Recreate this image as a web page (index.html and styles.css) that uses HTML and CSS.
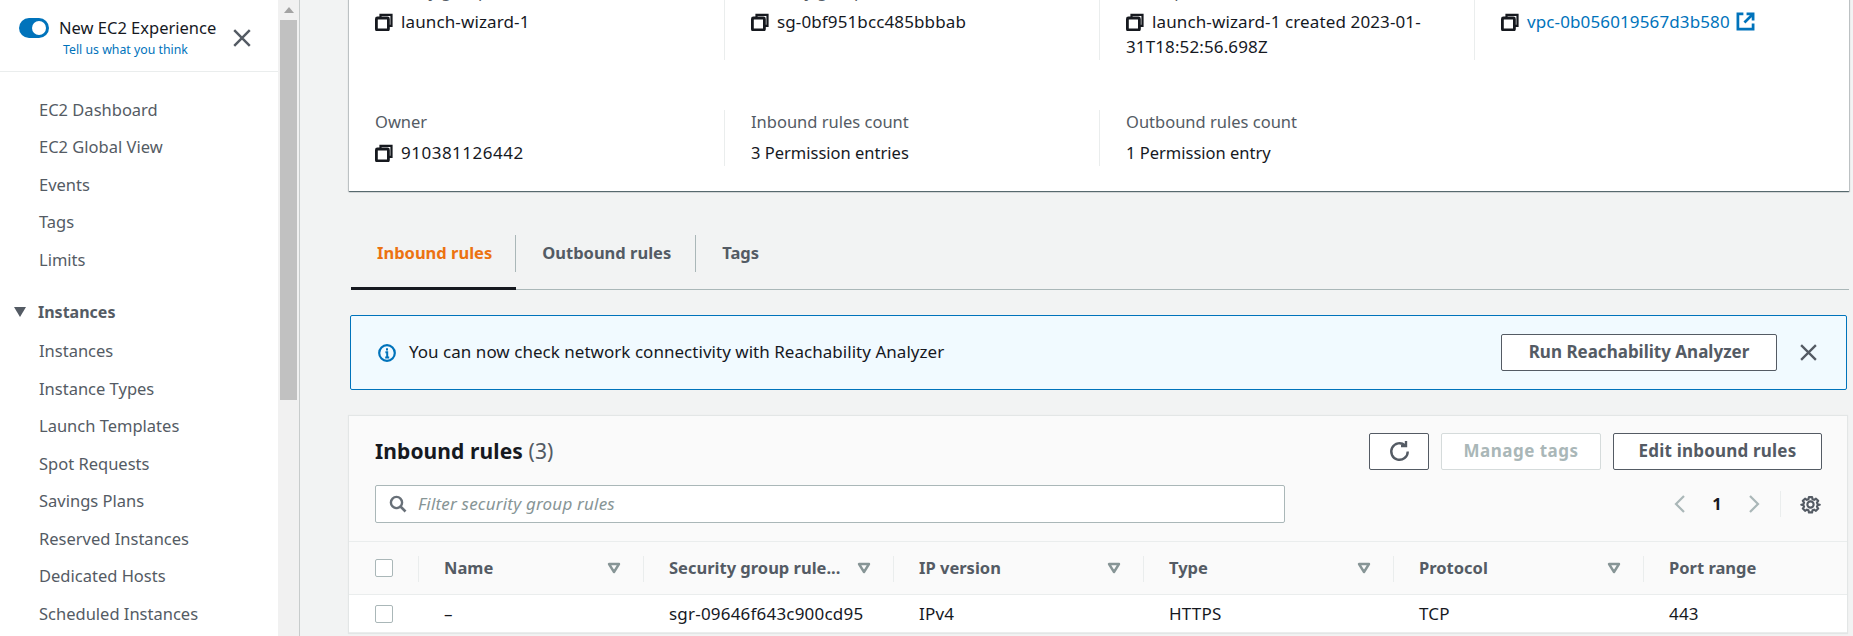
FILE: index.html
```html
<!DOCTYPE html>
<html lang="en">
<head>
    <meta charset="UTF-8">
    <title>Security Groups | EC2 Management Console</title>
    <link rel="stylesheet" href="styles.css">
</head>
<body>

<svg class="icon-defs" width="0" height="0">
    <symbol id="copy" viewBox="0 0 18 18">
        <path d="M5.5 5V1.8h11v11h-3" fill="none" stroke="currentColor" stroke-width="2.2"/>
        <rect x="1.4" y="5" width="12" height="12" rx="1" fill="none" stroke="currentColor" stroke-width="2.8"/>
    </symbol>
    <symbol id="close" viewBox="0 0 18 18">
        <path d="M2 2l14 14M16 2L2 16" fill="none" stroke="currentColor" stroke-width="2.2"/>
    </symbol>
    <symbol id="sort" viewBox="0 0 14 12">
        <path d="M2 2h10L7 10z" fill="none" stroke="currentColor" stroke-width="2.4" stroke-linejoin="round"/>
    </symbol>
</svg>

<aside class="sidebar">
    <div class="side-content">
        <div class="experience">
            <div class="exp-top">
                <span class="toggle"></span>
                <span class="exp-title">New EC2 Experience</span>
            </div>
            <a class="exp-link">Tell us what you think</a>
            <svg class="exp-close"><use href="#close"/></svg>
        </div>
        <nav class="side-nav">
            <a>EC2 Dashboard</a>
            <a>EC2 Global View</a>
            <a>Events</a>
            <a>Tags</a>
            <a>Limits</a>
            <div class="side-heading"><span class="caret"></span>Instances</div>
            <a>Instances</a>
            <a>Instance Types</a>
            <a>Launch Templates</a>
            <a>Spot Requests</a>
            <a>Savings Plans</a>
            <a>Reserved Instances</a>
            <a>Dedicated Hosts</a>
            <a>Scheduled Instances</a>
        </nav>
    </div>
    <div class="scrollbar">
        <span class="scroll-arrow"></span>
        <span class="scroll-thumb"></span>
    </div>
</aside>

<main class="main">
    <section class="details">
        <div class="cell">
            <div class="label">Security group name</div>
            <div class="value"><svg class="copy"><use href="#copy"/></svg>launch-wizard-1</div>
        </div>
        <div class="cell divided">
            <div class="label">Security group ID</div>
            <div class="value"><svg class="copy"><use href="#copy"/></svg>sg-0bf951bcc485bbbab</div>
        </div>
        <div class="cell divided">
            <div class="label">Description</div>
            <div class="value"><svg class="copy"><use href="#copy"/></svg>launch-wizard-1 created 2023-01-31T18:52:56.698Z</div>
        </div>
        <div class="cell divided">
            <div class="label">VPC ID</div>
            <div class="value">
                <svg class="copy"><use href="#copy"/></svg><a class="link">vpc-0b056019567d3b580</a>
                <svg class="external" viewBox="0 0 18 18"><path d="M7 1.8H1.8v14.4h14.4V11M10 1.8h6.2V8M16 2L8 10" fill="none" stroke="currentColor" stroke-width="2.6"/></svg>
            </div>
        </div>
        <div class="cell">
            <div class="label">Owner</div>
            <div class="value digits"><svg class="copy"><use href="#copy"/></svg>910381126442</div>
        </div>
        <div class="cell divided">
            <div class="label">Inbound rules count</div>
            <div class="value plain">3 Permission entries</div>
        </div>
        <div class="cell divided">
            <div class="label">Outbound rules count</div>
            <div class="value plain">1 Permission entry</div>
        </div>
    </section>

    <div class="tabs">
        <div class="tab active"><span class="tab-label">Inbound rules</span></div>
        <div class="tab"><span class="tab-label">Outbound rules</span></div>
        <div class="tab"><span class="tab-label last">Tags</span></div>
    </div>

    <div class="alert">
        <svg class="info" viewBox="0 0 18 18">
            <circle cx="9" cy="9" r="7.8" fill="none" stroke="currentColor" stroke-width="2.2"/>
            <path d="M9 4.2v2.4M7.4 8.2H9.2v5M7.2 13.4h4" fill="none" stroke="currentColor" stroke-width="2"/>
        </svg>
        <span class="alert-text">You can now check network connectivity with Reachability Analyzer</span>
        <button class="btn alert-btn">Run Reachability Analyzer</button>
        <svg class="alert-close"><use href="#close"/></svg>
    </div>

    <section class="rules">
        <div class="rules-head">
            <div class="rules-top">
                <h2>Inbound rules <span class="count">(3)</span></h2>
                <div class="actions">
                    <button class="btn refresh">
                        <svg viewBox="0 0 20 20" width="25" height="25"><path d="M16.6 10a6.6 6.6 0 1 1-2.2-4.9M15.2 1.6v4h-4" fill="none" stroke="currentColor" stroke-width="1.9"/></svg>
                    </button>
                    <button class="btn disabled">Manage tags</button>
                    <button class="btn edit">Edit inbound rules</button>
                </div>
            </div>
            <div class="rules-filter">
                <div class="filter">
                    <svg viewBox="0 0 18 18" width="18" height="18"><circle cx="7.5" cy="7.5" r="5.6" fill="none" stroke="currentColor" stroke-width="2.4"/><path d="M11.5 11.5l5 5" fill="none" stroke="currentColor" stroke-width="2.6"/></svg>
                    <span>Filter security group rules</span>
                </div>
                <div class="pager">
                    <svg viewBox="0 0 14 20" width="14" height="20"><path d="M11 2L3 10l8 8" fill="none" stroke="currentColor" stroke-width="2.2"/></svg>
                    <b>1</b>
                    <svg viewBox="0 0 14 20" width="14" height="20"><path d="M3 2l8 8-8 8" fill="none" stroke="currentColor" stroke-width="2.2"/></svg>
                    <span class="pager-line">
                        <svg viewBox="0 0 20 20" width="21" height="21"><circle cx="10" cy="10" r="3" fill="none" stroke="currentColor" stroke-width="2"/><path d="M8.3 1.5h3.4l.5 2.3 1.7.7 2-1.3 2.4 2.4-1.3 2 .7 1.7 2.3.5v0l-2.3.5-.7 1.7 1.3 2-2.4 2.4-2-1.3-1.7.7-.5 2.3H8.3l-.5-2.3-1.7-.7-2 1.3-2.4-2.4 1.3-2-.7-1.7-2.3-.5v0l2.3-.5.7-1.7-1.3-2 2.4-2.4 2 1.3 1.7-.7z" transform="translate(1.2 1.6) scale(.88)" fill="none" stroke="currentColor" stroke-width="2.3" stroke-linejoin="round"/></svg>
                    </span>
                </div>
            </div>
        </div>
        <div class="table">
            <div class="th first"><span class="check"></span></div>
            <div class="th"><span class="th-text">Name</span><svg class="sort"><use href="#sort"/></svg></div>
            <div class="th"><span class="th-text">Security group rule...</span><svg class="sort"><use href="#sort"/></svg></div>
            <div class="th"><span class="th-text">IP version</span><svg class="sort"><use href="#sort"/></svg></div>
            <div class="th"><span class="th-text">Type</span><svg class="sort"><use href="#sort"/></svg></div>
            <div class="th"><span class="th-text">Protocol</span><svg class="sort"><use href="#sort"/></svg></div>
            <div class="th"><span class="th-text">Port range</span></div>

            <div class="td first"><span class="check"></span></div>
            <div class="td">–</div>
            <div class="td">sgr-09646f643c900cd95</div>
            <div class="td">IPv4</div>
            <div class="td">HTTPS</div>
            <div class="td">TCP</div>
            <div class="td">443</div>
        </div>
    </section>
</main>

</body>
</html>
```

FILE: styles.css
```css
* {
    box-sizing: border-box;
}

body {
    margin: 0;
    height: 100vh;
    overflow: hidden;
    display: flex;
    background: #f2f3f3;
    color: #16191f;
    font-family: "Noto Sans", "Liberation Sans", sans-serif;
    font-size: 16.5px;
}

.icon-defs {
    position: absolute;
}

/* left nav */
.sidebar {
    width: 300px;
    flex: none;
    display: flex;
    background: #fff;
    border-right: 1px solid #c8cccc;
}

.side-content {
    width: 278px;
    flex: none;
}

.experience {
    height: 72px;
    padding: 15px 0 0 19px;
    border-bottom: 1px solid #eaeded;
    display: grid;
    grid-template-columns: 202px 40px;
    grid-template-rows: 24px 22px;
}

.exp-top {
    display: flex;
    align-items: center;
    gap: 10px;
}

.toggle {
    width: 30px;
    height: 20px;
    flex: none;
    margin-top: 2px;
    border-radius: 10px;
    background: #0073bb;
    display: flex;
    justify-content: flex-end;
    align-items: center;
    padding-right: 3px;
}

.toggle::after {
    content: "";
    width: 14px;
    height: 14px;
    border-radius: 50%;
    background: #fff;
}

.exp-title {
    white-space: nowrap;
    color: #16191f;
}

.exp-link {
    grid-row: 2;
    padding-left: 44px;
    font-size: 12.3px;
    line-height: 22px;
    color: #0073bb;
    white-space: nowrap;
}

.exp-close {
    grid-column: 2;
    grid-row: 1 / 3;
    width: 20px;
    height: 20px;
    margin: 13px 0 0 11px;
    color: #545b64;
}

.side-nav {
    padding-top: 18.5px;
    display: flex;
    flex-direction: column;
}

.side-nav a {
    height: 37.5px;
    line-height: 37.5px;
    padding-left: 39px;
    color: #545b64;
}

.side-heading {
    display: flex;
    align-items: center;
    gap: 12px;
    height: 37px;
    margin: 15px 0 2px;
    padding-left: 14px;
    font-weight: 700;
    font-size: 16px;
    color: #545b64;
}

.caret {
    width: 0;
    height: 0;
    border-left: 6.5px solid transparent;
    border-right: 6.5px solid transparent;
    border-top: 10px solid #545b64;
}

.scrollbar {
    flex: 1;
    background: #f1f1f1;
    padding: 7px 2px 0 2px;
    display: flex;
    flex-direction: column;
    align-items: stretch;
}

.scroll-arrow {
    align-self: center;
    width: 0;
    height: 0;
    border-left: 5px solid transparent;
    border-right: 5px solid transparent;
    border-bottom: 6px solid #a3a3a3;
}

.scroll-thumb {
    margin-top: 7px;
    height: 380px;
    background: #c1c1c1;
}

/* main column */
.main {
    flex: 1;
    min-width: 0;
    padding: 0 4px 0 49px;
}

.details {
    margin-top: -47px;
    padding: 26px 0 25px 26px;
    background: #fff;
    box-shadow: 0 1px 1px 0 rgba(0, 28, 36, 0.5), 1px 1px 1px 0 rgba(0, 28, 36, 0.15), -1px 1px 1px 0 rgba(0, 28, 36, 0.15);
    display: grid;
    grid-template-columns: 349px 375px 375px 375px;
    row-gap: 50px;
}

.cell {
    padding-right: 26px;
}

.divided {
    padding-left: 26px;
    border-left: 1px solid #eaeded;
}

.label {
    line-height: 24px;
    margin-bottom: 6px;
    color: #545b64;
}

.value {
    font-size: 17px;
    letter-spacing: 0.12px;
    line-height: 25px;
    padding-bottom: 1px;
}

.value.plain {
    font-size: 16.5px;
    letter-spacing: 0;
}

.value.digits {
    letter-spacing: 0.5px;
}

.copy {
    width: 18px;
    height: 18px;
    margin-right: 8px;
    vertical-align: -3px;
    color: #16191f;
}

.link {
    color: #0073bb;
}

.external {
    width: 19px;
    height: 19px;
    margin-left: 2px;
    vertical-align: -3px;
    color: #0073bb;
}

/* tabs */
.tabs {
    margin: 44px 0 0 2px;
    display: flex;
    box-shadow: inset 0 -1px 0 #aab7b8;
}

.tab {
    padding-bottom: 15px;
    border-bottom: 3px solid transparent;
}

.tab.active {
    border-bottom-color: #16191f;
}

.tab-label {
    display: block;
    height: 37px;
    line-height: 35px;
    padding: 0 24px 0 26px;
    font-weight: 700;
    color: #545b64;
    border-right: 1px solid #aab7b8;
    white-space: nowrap;
}

.tab.active .tab-label {
    color: #ec7211;
    padding-right: 23px;
}

.tab-label.last {
    border-right: none;
}

/* info banner */
.alert {
    margin: 25px 2px 0 1px;
    height: 75px;
    padding: 0 28px 0 27px;
    display: flex;
    align-items: center;
    background: #f1faff;
    border: 1px solid #0073bb;
    border-radius: 2px;
}

.info {
    width: 18px;
    height: 18px;
    flex: none;
    color: #0073bb;
    margin-right: 13px;
}

.alert-text {
    flex: 1;
    font-size: 17px;
    letter-spacing: 0.03px;
    padding-bottom: 2px;
}

.btn {
    height: 37px;
    padding: 0 22px 2px;
    border: 1px solid #545b64;
    border-radius: 2px;
    background: #fff;
    color: #545b64;
    font: 700 17px "Noto Sans", "Liberation Sans", sans-serif;
    white-space: nowrap;
}

.alert-btn {
    width: 276px;
    padding: 0 0 2px;
}

.alert-close {
    width: 19px;
    height: 19px;
    margin-left: 22px;
    color: #545b64;
}

/* rules table */
.rules {
    margin: 26px 2px 0 0;
    background: #fff;
    box-shadow: 0 0 1px 1px rgba(0, 28, 36, 0.06);
}

.rules-head {
    padding: 17px 25px 18px 26px;
    background: #fafafa;
    border-bottom: 1px solid #eaeded;
}

.rules-top {
    display: flex;
    justify-content: space-between;
    align-items: center;
}

h2 {
    margin: 0;
    padding-bottom: 2px;
    font-size: 21px;
    letter-spacing: 0.1px;
    font-weight: 700;
    color: #16191f;
}

.count {
    font-weight: 400;
    color: #545b64;
}

.actions {
    display: flex;
    gap: 12px;
}

.refresh {
    width: 60px;
    padding: 0;
    display: flex;
    align-items: center;
    justify-content: center;
}

.disabled {
    width: 160px;
    padding: 0 0 2px;
    border-color: #d5dbdb;
    color: #aab7b8;
    letter-spacing: 0.5px;
}

.edit {
    width: 209px;
    padding: 0 0 2px;
    letter-spacing: 0.2px;
}

.rules-filter {
    margin-top: 15px;
    display: flex;
    justify-content: space-between;
    align-items: center;
}

.filter {
    width: 910px;
    height: 38px;
    padding-left: 13px;
    display: flex;
    align-items: center;
    gap: 11px;
    background: #fff;
    border: 1px solid #aab7b8;
    border-radius: 2px;
    color: #687078;
}

.filter span {
    padding-bottom: 2px;
    font-size: 17px;
    letter-spacing: 0.2px;
    font-style: italic;
    color: #879596;
}

.pager {
    display: flex;
    align-items: center;
    color: #aab7b8;
}

.pager b {
    width: 60px;
    text-align: center;
    padding-bottom: 2px;
    color: #16191f;
}

.pager-line {
    margin-left: 19px;
    padding-left: 19px;
    margin-right: 1px;
    height: 26px;
    display: flex;
    align-items: center;
    border-left: 1px solid #eaeded;
    color: #545b64;
}

.table {
    display: grid;
    grid-template-columns: 69px 225px repeat(4, 250px) 1fr;
}

.th {
    height: 53px;
    display: flex;
    align-items: center;
    justify-content: space-between;
    padding: 0 22px 0 26px;
    background: #fafafa;
    border-bottom: 1px solid #eaeded;
    font-weight: 700;
    color: #545b64;
    position: relative;
}

/* short divider between header cells */
.th + .th::before {
    content: "";
    position: absolute;
    left: 0;
    top: 14px;
    height: 26px;
    border-left: 1px solid #eaeded;
}

.th-text {
    white-space: nowrap;
    padding-bottom: 2px;
}

.sort {
    width: 14px;
    height: 12px;
    flex: none;
    color: #879596;
}

.td {
    height: 38px;
    line-height: 38px;
    padding-left: 26px;
    border-bottom: 1px solid #eaeded;
    white-space: nowrap;
    font-size: 17px;
    letter-spacing: 0.2px;
}

.first {
    display: flex;
    align-items: center;
}

.check {
    width: 18px;
    height: 18px;
    background: #fff;
    border: 1px solid #aab7b8;
    border-radius: 2px;
}
```
